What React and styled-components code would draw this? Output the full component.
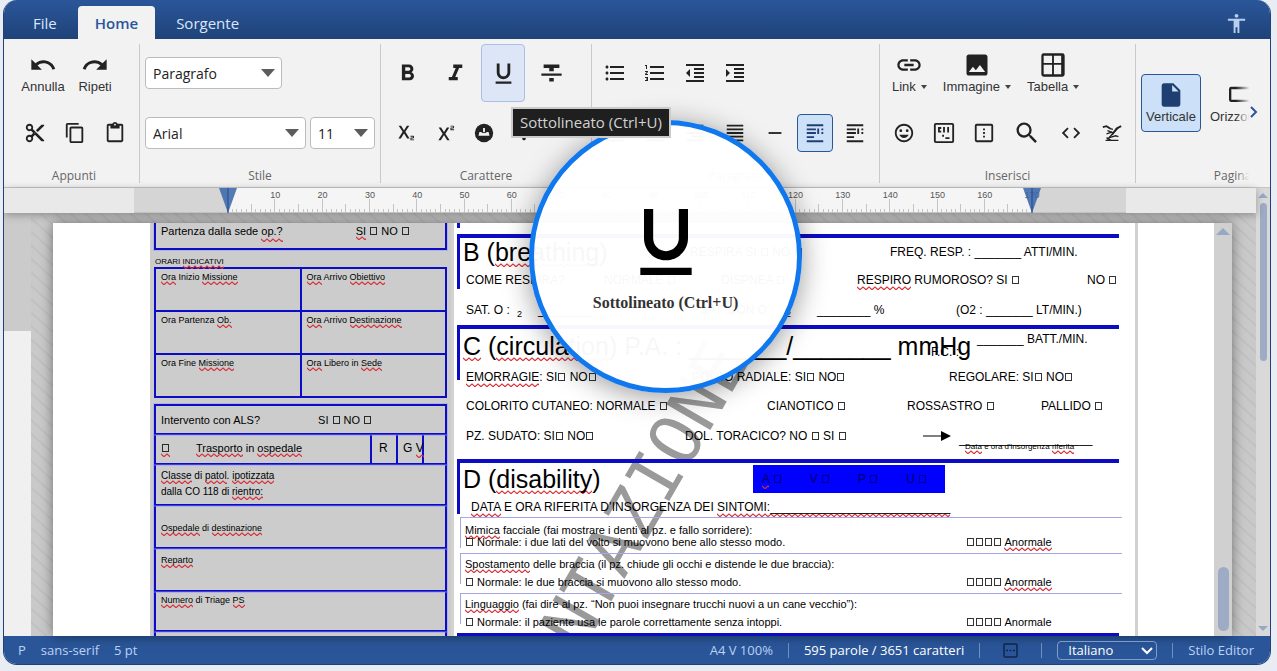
import React from 'react';
import styled, { createGlobalStyle, css } from 'styled-components';
import {
  MdAccessibility,
  MdUndo,
  MdRedo,
  MdContentCut,
  MdContentCopy,
  MdContentPaste,
  MdFormatBold,
  MdFormatItalic,
  MdFormatUnderlined,
  MdFormatStrikethrough,
  MdSubscript,
  MdSuperscript,
  MdFormatListBulleted,
  MdFormatListNumbered,
  MdFormatIndentDecrease,
  MdFormatIndentIncrease,
  MdFormatAlignLeft,
  MdFormatAlignCenter,
  MdFormatAlignRight,
  MdFormatAlignJustify,
  MdMoreVert,
  MdRemove,
  MdLink,
  MdImage,
  MdInsertEmoticon,
  MdSearch,
  MdCode,
  MdInsertDriveFile,
} from 'react-icons/md';


const GlobalStyle = createGlobalStyle`
  * {
    box-sizing: border-box;
  }
  body {
    margin: 0;
    background-color: #e9ecf3;
    font-family: "Open Sans", "Noto Sans", sans-serif;
    font-size: 14px;
    color: #222;
  }
  button, select {
    font-family: inherit;
  }
`;

const Frame = styled.div`
  position: relative;
  display: flex;
  flex-direction: column;
  height: calc(100vh - 6px);
  margin: 0 6px 6px 3px;
  border: solid #1f4178;
  border-width: 0 1px 1px;
  border-radius: 14px;
  background-color: #f2f2f2;
  overflow: hidden;
`;

/* ---- header ---- */

const Header = styled.header`
  display: flex;
  align-items: flex-end;
  flex: none;
  height: 39px;
  padding: 0 22px 0 12px;
  background: linear-gradient(#2a5699, #1f4379);
`;

const Tabs = styled.nav`
  display: flex;
  gap: 4px;
  flex: 1;
`;

const Tab = styled.button`
  height: 33px;
  padding: 0 17px;
  border: 0;
  border-radius: 4px 4px 0 0;
  font-size: 15px;
  color: ${p => (p.$active ? '#2a5699' : '#dbe7fb')};
  font-weight: ${p => (p.$active ? 600 : 400)};
  background-color: ${p => (p.$active ? '#f2f2f2' : 'transparent')};
`;

const HeaderButton = styled.button`
  display: flex;
  padding: 0;
  border: 0;
  margin-bottom: 4px;
  background: none;
  color: #b9cff2;
  font-size: 23px;
`;

/* ---- ribbon ---- */

const Ribbon = styled.div`
  position: relative;
  display: flex;
  flex: none;
  padding-top: 5px;
  border-bottom: 1px solid #c6c6c6;
  overflow: hidden;
`;

const Group = styled.section`
  flex: none;
  width: ${p => p.$width}px;
  padding-left: ${p => p.$pad}px;
  margin-bottom: 4px;
  border-right: 1px solid #c9c9c9;
`;

const ToolRow = styled.div`
  display: flex;
  align-items: center;
  gap: ${p => (p.$gap === undefined ? 4 : p.$gap)}px;
  height: ${p => (p.$tall ? 118 : 58)}px;
  margin-bottom: 2px;
  padding-left: ${p => p.$indent || 0}px;
`;

const GroupTitle = styled.h2`
  margin: 0 0 0 -${p => p.$pad}px;
  padding-top: 4px;
  font-size: 12px;
  font-weight: 400;
  line-height: 15px;
  text-align: center;
  color: #666;
`;

const active = css`
  border-color: #2a5699;
  background-color: #cce0f8;
  color: #1f3f73;
`;

const ToolButton = styled.button`
  display: flex;
  align-items: center;
  justify-content: center;
  width: ${p => p.$width || 36}px;
  height: 38px;
  padding: 0;
  border: 1px solid transparent;
  border-radius: 4px;
  background: none;
  color: #222;
  font-size: ${p => p.$size || 22}px;
  ${p => p.$active && active}
`;

const BigToolButton = styled(ToolButton)`
  width: 44px;
  height: 58px;
  font-size: 27px;
  ${p => p.$hover && css`
    border-color: #a9bfe6;
    background-color: #dce6f6;
  `}
`;

const LabelButton = styled.button`
  display: flex;
  flex-direction: column;
  align-items: center;
  height: 58px;
  min-width: ${p => p.$min || 0}px;
  padding: 6px ${p => p.$pad || 0}px 0;
  border: 1px solid transparent;
  border-radius: 4px;
  background: none;
  color: #222;
  font-size: 28px;
  ${p => p.$active && active}

  span {
    display: flex;
    align-items: center;
    gap: 5px;
    font: 13px/16px "Liberation Sans", Arial, sans-serif;
    color: #333;
    white-space: nowrap;
  }
`;

const Caret = styled.i`
  border: 3px solid transparent;
  border-top: 4px solid #444;
  border-bottom: 0;
`;

const SelectBox = styled.label`
  position: relative;
  width: ${p => p.$width}px;

  select {
    appearance: none;
    width: 100%;
    height: 32px;
    padding: 0 7px;
    border: 1px solid #bbb;
    border-radius: 4px;
    background-color: #fff;
    color: #222;
    font-size: 14px;
  }
  &::after {
    content: '';
    position: absolute;
    right: 7px;
    top: 12px;
    border: 7px solid transparent;
    border-top: 8px solid #5c5c5c;
    border-bottom: 0;
    pointer-events: none;
  }
`;

const ScrollRight = styled.button`
  position: absolute;
  right: 0;
  top: 0;
  bottom: 0;
  width: 34px;
  padding: 0 0 0 2px;
  border: 0;
  background: linear-gradient(to right, rgba(242, 242, 242, 0), #f2f2f2 40%);
`;

/* ---- body: ruler, page, scrollbars ---- */

const Body = styled.main`
  display: flex;
  flex: 1;
  min-height: 0;
`;

const Column = styled.div`
  display: flex;
  flex-direction: column;
  flex: 1;
  min-width: 0;
`;

const Ruler = styled.div`
  display: flex;
  justify-content: center;
  flex: none;
  height: 25px;
  background-color: #e9e9e9;
  position: relative;
  z-index: 1;
  box-shadow: 0 2px 8px rgba(0, 0, 0, .3);
`;

const RulerSheet = styled.div`
  width: 992px;
  padding: 0 94px;
  background-color: #d5d5d5;
  border-bottom: 1px solid #c2c2c2;
`;

const RulerScale = styled.div`
  position: relative;
  display: flex;
  height: 24px;
  background-color: #f5f5f5;
`;

const Centimetre = styled.div`
  position: relative;
  display: flex;
  align-items: flex-end;
  flex: 1;

  span {
    position: absolute;
    right: -12px;
    top: 2px;
    width: 24px;
    text-align: center;
    font: 9px/11px "Liberation Sans", Arial, sans-serif;
    color: #555;
  }
`;

const Tick = styled.i`
  flex: 1;
  height: ${p => p.$height}px;
  border-right: 1px solid #c4c4c4;
`;

const RulerMark = styled.svg`
  position: absolute;
  top: 0;
  ${p => p.$side}: -9px;
`;

const Workspace = styled.div`
  display: flex;
  flex: 1;
  min-height: 0;
  background: repeating-linear-gradient(42deg, #c9c9c9 0 7px, #c1c1c1 8px 9px, #c9c9c9 10px);
`;

const VerticalRuler = styled.div`
  flex: none;
  width: 27px;
  background: linear-gradient(#cbcbcb 0 118px, #f0f0f0 118px);
`;

const Page = styled.article`
  position: relative;
  display: flex;
  flex: 1;
  margin: 10px 24px 0 22px;
  background-color: #fff;
  box-shadow: 0 0 12px rgba(0, 0, 0, .45);
  overflow: hidden;
  font-family: "Liberation Sans", Arial, sans-serif;
  font-size: 12px;
  color: #000;
  white-space: pre;
`;

const PageMargin = styled.div`
  flex: none;
  width: 76px;
`;

const Track = styled.div`
  display: flex;
  flex-direction: column;
  align-items: center;
  flex: none;
  width: ${p => p.$width}px;
  padding: 5px 0;
  background-color: ${p => p.$color};
`;

const TrackArrow = styled.i`
  border: ${p => p.$size}px solid transparent;
  ${p => (p.$down ? 'border-bottom: 0; border-top-color: #97a8c4;' : 'border-top: 0; border-bottom-color: #97a8c4;')}
`;

const Thumb = styled.div`
  width: ${p => p.$width}px;
  height: ${p => p.$height}px;
  margin: ${p => p.$top}px 0 auto;
  border-radius: 6px;
  background-color: #9dabc4;
`;

const Watermark = styled.div`
  position: absolute;
  left: 592px;
  top: 272px;
  transform: translate(-50%, -50%) rotate(-60deg);
  font: 70px/70px "DejaVu Sans Mono", monospace;
  color: #9a9a9a;
`;

/* ---- printed form, left side ---- */

const zigzag = `url("data:image/svg+xml,%3Csvg xmlns='http://www.w3.org/2000/svg' width='6' height='4'%3E%3Cpath d='M-1 0l4 3.500 4-3.500' transform='translate(0 .2)' fill='none' stroke='%23d62f37' stroke-width='1.200'/%3E%3C/svg%3E")`;

const Wrong = styled.span`
  padding-bottom: 3px;
  background: ${zigzag} left bottom repeat-x;
`;

const Square = styled.span`
  display: inline-block;
  width: 7px;
  height: 8px;
  margin: 0 1px;
  border: 1px solid currentColor;
  opacity: .8;
`;

const LeftForm = styled.div`
  position: relative;
  flex: none;
  width: 301px;
  margin-left: 97px;
  padding: 0 4px;
  background-color: #ccc;
  font-size: 9px;
`;

const Box = styled.div`
  display: flex;
  align-items: ${p => p.$align || 'center'};
  height: ${p => p.$height}px;
  margin-top: ${p => p.$top || 0}px;
  padding: ${p => p.$inset || 0}px 5px 0;
  border: 2px solid #0c0cc4;
  ${p => p.$open && 'border-top: 0;'}
  font-size: ${p => p.$size || 9}px;
  line-height: 16px;
  outline: 1px solid rgba(140, 140, 255, .4);
`;

const Push = styled.span`
  margin-left: ${p => p.$by}px;
`;

const Caption = styled.div`
  padding: 6px 1px 0;
  font-size: 8px;
  line-height: 11px;
`;

const Times = styled.table`
  width: 100%;
  border-collapse: collapse;

  td {
    width: 50%;
    height: 43px;
    padding: 3px 5px;
    border: 2px solid #0c0cc4;
    line-height: 11px;
    vertical-align: top;
  }
`;

const Transport = styled(Box)`
  padding: 0;
  align-items: stretch;
  line-height: 26px;
`;

const TransportCell = styled.div`
  width: ${p => p.$width}px;
  padding-left: ${p => p.$pad || 0}px;
  border-right: ${p => (p.$last ? 0 : '2px solid #0c0cc4')};
  font-size: ${p => p.$size || 11}px;
`;

/* ---- printed form, right side ---- */

const RightForm = styled.div`
  position: relative;
  flex: 1;
  padding: 0 16px 0 3px;
  border: solid #d2d2d2;
  border-width: 0 3px;
`;

const Stub = styled.div`
  width: 3px;
  height: 5px;
  margin-bottom: 6px;
  background-color: #0c0cc4;
`;

const Section = styled.section`
  position: relative;
  height: ${p => p.$height}px;
  padding-left: 6px;
  border-top: 4px solid #0c0cc4;

  &::before {
    content: '';
    position: absolute;
    left: 0;
    top: 0;
    width: 3px;
    height: 51px;
    background-color: #0c0cc4;
  }
`;

const Line = styled.div`
  display: grid;
  grid-template-columns: ${p => p.$cols};
  align-items: center;
  height: ${p => p.$height || 28}px;
  padding-left: ${p => (p.$title ? 0 : 3)}px;
`;

const Title = styled.h3`
  margin: 0;
  font-size: 25px;
  line-height: 28px;
  font-weight: 400;

  ${Wrong} {
    padding-bottom: 1px;
  }
`;

const Small = styled.span`
  font-size: 9px;
  padding-top: 8px;
`;

const HeartRate = styled.span`
  position: absolute;
  left: 474px;
  top: 16px;
`;

const Beats = styled.span`
  align-self: start;
  padding-top: 3px;
`;

const Onset = styled.div`
  position: relative;
  padding-top: 5px;

  small {
    position: absolute;
    left: 6px;
    top: 15px;
    font-size: 8px;
  }
`;

const Avpu = styled.div`
  display: flex;
  gap: 28px;
  width: 192px;
  height: 28px;
  padding-left: 9px;
  align-items: center;
  background-color: #0000fe;
  color: #000060;
`;

const Symptoms = styled.p`
  margin: 0;
  padding: 5px 0 0 8px;
  height: 22px;
  line-height: 14px;
`;

const Test = styled.div`
  height: ${p => p.$height}px;
  margin: 0 -3px 0 -3px;
  padding: ${p => p.$top}px 0 0 5px;
  border-top: 1px solid #a6a6e4;
  background: linear-gradient(#a6a6e4, #a6a6e4) left top / 1px 30px no-repeat;
  font-size: 11px;
  line-height: ${p => p.$line || 14}px;
`;

const Answers = styled.div`
  display: grid;
  grid-template-columns: 501px auto;
  padding-top: ${p => p.$top}px;
`;

/* ---- overlays ---- */

const Tooltip = styled.div`
  position: absolute;
  left: 507px;
  top: 107px;
  padding: 4px 7px 5px;
  border: 2px solid #cbcbcb;
  background-color: #1f1f1f;
  color: #d2d2d2;
  font-size: 15px;
  line-height: 18px;
  z-index: 3;
`;

const Lens = styled.figure`
  position: absolute;
  left: 525px;
  top: 120px;
  display: flex;
  flex-direction: column;
  align-items: center;
  width: 273px;
  height: 273px;
  margin: 0;
  padding-top: 73px;
  border: 5px solid #1078ee;
  border-radius: 50%;
  background-color: rgba(255, 255, 255, .97);
  box-shadow: 0 4px 28px rgba(0, 0, 0, .4);
  color: #000;
  z-index: 2;

  figcaption {
    margin-top: 7px;
    font: bold 16px/20px "Liberation Serif", "Times New Roman", serif;
    color: #333;
  }
`;

/* ---- status bar ---- */

const StatusBar = styled.footer`
  display: flex;
  align-items: center;
  flex: none;
  height: 28px;
  gap: 15px;
  padding: 0 16px 0 14px;
  background-color: #2a5699;
  color: #bcd2f5;
  font-size: 13px;
`;

const Spacer = styled.div`
  flex: 1;
`;

const Divider = styled.i`
  width: 1px;
  height: 15px;
  background-color: #6f90c4;
`;

const Count = styled.span`
  color: #fff;
`;

const StatusButton = styled.button`
  display: flex;
  padding: 0;
  border: 0;
  margin: 0 8px;
  background: none;
  color: #10264c;
`;

const Language = styled.label`
  position: relative;
  display: flex;

  select {
    appearance: none;
    width: 100px;
    height: 19px;
    padding: 0 10px;
    border: 1px solid #7f9dcc;
    border-radius: 4px;
    background: none;
    color: #fff;
    font-size: 13px;
    line-height: 16px;
  }
  svg {
    position: absolute;
    right: 4px;
    top: 4px;
    pointer-events: none;
  }
`;


const Icon = ({ children }) => (
  <svg viewBox="0 0 24 24" width="1em" height="1em" fill="none" stroke="currentColor" strokeWidth="2" aria-hidden="true">
    {children}
  </svg>
);

const PinIcon = () => (
  <Icon>
    <circle cx="12" cy="12" r="10" fill="currentColor" stroke="none" />
    <path d="M11 6.500h2V11h4l1 4H6l1-4h4z" fill="#f2f2f2" stroke="none" />
    <path d="M9.500 11.500h5" strokeWidth="1" />
  </Icon>
);

const WrapIcon = () => (
  <Icon>
    <path d="M3 3.500h18M3 8h10M3 12h10M3 16.500h8M3 21h18" />
    <path d="M15.500 7v6M20 7v2M20 11v2" />
  </Icon>
);

const CaptchaIcon = () => (
  <Icon>
    <rect x="2" y="2" width="20" height="20" rx="1" />
    <path d="M9 6.500H6.500v4H9M12 5.500v6M16.500 5.500v6" />
    <path d="M10 15h2M13.500 17.500H18" />
  </Icon>
);

const BreakIcon = () => (
  <Icon>
    <rect x="3" y="3" width="18" height="18" rx="1" />
    <path d="M12 7v2M12 11v2M12 15v2" />
  </Icon>
);

const TableIcon = () => (
  <Icon>
    <rect x="3" y="3" width="18" height="18" rx="1" />
    <path d="M3 11h18M12 3v18" strokeWidth="1.600" />
    <path d="M20 3v18" />
  </Icon>
);

const SignIcon = () => (
  <Icon>
    <path d="M2 5.500l4-1 4 2.500M22 4.500l-5 2.500-5 7" />
    <path d="M9 7l4 1M7 9.500l6 2M6 13l6-2M5 20h14M6 17l5 3M9 17l7-2 3 1" strokeWidth="1.500" />
    <path d="M19 6L7 19" strokeWidth="1.500" />
  </Icon>
);

const LandscapeIcon = () => (
  <Icon>
    <rect x="1" y="6" width="22" height="11" rx="1" />
  </Icon>
);

const Marker = ({ side }) => (
  <RulerMark $side={side} width="18" height="25" viewBox="0 0 18 25">
    <path d="M0 0h18L9 25z" fill="#3c69ab" fillOpacity=".88" />
    <path d="M9 0v25" stroke="#1f4a90" />
  </RulerMark>
);

const ticks = [3, 3, 3, 3, 8, 3, 3, 3, 3, 13];
const marks = Array.from({ length: 17 }, (_, i) => (i + 1) * 10);

function RibbonBar() {
  return (
    <Ribbon>
      <Group $width={136} $pad={13}>
        <ToolRow $gap={0}>
          <LabelButton $min={52}><MdUndo /><span>Annulla</span></LabelButton>
          <LabelButton $min={52}><MdRedo /><span>Ripeti</span></LabelButton>
        </ToolRow>
        <ToolRow>
          <ToolButton aria-label="Taglia"><MdContentCut /></ToolButton>
          <ToolButton aria-label="Copia"><MdContentCopy /></ToolButton>
          <ToolButton aria-label="Incolla"><MdContentPaste /></ToolButton>
        </ToolRow>
        <GroupTitle $pad={8}>Appunti</GroupTitle>
      </Group>

      <Group $width={241} $pad={5}>
        <ToolRow>
          <SelectBox $width={137}>
            <select aria-label="Stile paragrafo"><option>Paragrafo</option></select>
          </SelectBox>
        </ToolRow>
        <ToolRow>
          <SelectBox $width={161}>
            <select aria-label="Carattere"><option>Arial</option></select>
          </SelectBox>
          <SelectBox $width={65}>
            <select aria-label="Dimensione"><option>11</option></select>
          </SelectBox>
        </ToolRow>
        <GroupTitle $pad={5}>Stile</GroupTitle>
      </Group>

      <Group $width={211} $pad={4}>
        <ToolRow>
          <BigToolButton aria-label="Grassetto"><MdFormatBold /></BigToolButton>
          <BigToolButton aria-label="Corsivo"><MdFormatItalic /></BigToolButton>
          <BigToolButton aria-label="Sottolineato" $hover><MdFormatUnderlined /></BigToolButton>
          <BigToolButton aria-label="Barrato"><MdFormatStrikethrough /></BigToolButton>
        </ToolRow>
        <ToolRow $indent={1}>
          <ToolButton aria-label="Pedice"><MdSubscript /></ToolButton>
          <ToolButton aria-label="Apice"><MdSuperscript /></ToolButton>
          <ToolButton aria-label="Colore evidenziatore"><PinIcon /></ToolButton>
          <ToolButton aria-label="Altro"><MdMoreVert /></ToolButton>
        </ToolRow>
        <GroupTitle $pad={4}>Carattere</GroupTitle>
      </Group>

      <Group $width={288} $pad={5}>
        <ToolRow>
          <ToolButton $size={24} aria-label="Elenco puntato"><MdFormatListBulleted /></ToolButton>
          <ToolButton $size={24} aria-label="Elenco numerato"><MdFormatListNumbered /></ToolButton>
          <ToolButton $size={24} aria-label="Riduci rientro"><MdFormatIndentDecrease /></ToolButton>
          <ToolButton $size={24} aria-label="Aumenta rientro"><MdFormatIndentIncrease /></ToolButton>
        </ToolRow>
        <ToolRow>
          <ToolButton aria-label="Allinea a sinistra"><MdFormatAlignLeft /></ToolButton>
          <ToolButton aria-label="Centra"><MdFormatAlignCenter /></ToolButton>
          <ToolButton aria-label="Allinea a destra"><MdFormatAlignRight /></ToolButton>
          <ToolButton aria-label="Giustifica"><MdFormatAlignJustify /></ToolButton>
          <ToolButton aria-label="Linea"><MdRemove /></ToolButton>
          <ToolButton aria-label="Testo a sinistra" $active><WrapIcon /></ToolButton>
          <ToolButton aria-label="Testo a destra"><WrapIcon /></ToolButton>
        </ToolRow>
        <GroupTitle $pad={5}>Paragrafo</GroupTitle>
      </Group>

      <Group $width={256} $pad={4}>
        <ToolRow $gap={0}>
          <LabelButton $pad={7}><MdLink /><span>Link <Caret /></span></LabelButton>
          <LabelButton $pad={7}><MdImage /><span>Immagine <Caret /></span></LabelButton>
          <LabelButton $pad={7}><TableIcon /><span>Tabella <Caret /></span></LabelButton>
        </ToolRow>
        <ToolRow $indent={2}>
          <ToolButton aria-label="Emoji"><MdInsertEmoticon /></ToolButton>
          <ToolButton aria-label="Codice"><CaptchaIcon /></ToolButton>
          <ToolButton aria-label="Interruzione"><BreakIcon /></ToolButton>
          <ToolButton aria-label="Cerca" $width={42} $size={28}><MdSearch /></ToolButton>
          <ToolButton aria-label="Sorgente" $width={38}><MdCode /></ToolButton>
          <ToolButton aria-label="Firma"><SignIcon /></ToolButton>
        </ToolRow>
        <GroupTitle $pad={4}>Inserisci</GroupTitle>
      </Group>

      <Group $width={194} $pad={5}>
        <ToolRow $tall>
          <LabelButton $active $min={60} $pad={4}><MdInsertDriveFile /><span>Verticale</span></LabelButton>
          <LabelButton $pad={4}><LandscapeIcon /><span>Orizzontale</span></LabelButton>
        </ToolRow>
        <GroupTitle $pad={5}>Pagina</GroupTitle>
      </Group>

      <ScrollRight aria-label="Avanti">
        <svg width="8" height="12" viewBox="0 0 8 12" fill="none" stroke="#2a5699" strokeWidth="2">
          <path d="M1 1l5 5-5 5" />
        </svg>
      </ScrollRight>
    </Ribbon>
  );
}

function LeftSide() {
  return (
    <LeftForm>
      <Box $open $height={27} $size={11} $align="flex-start">
        Partenza dalla sede <Wrong>op.?</Wrong>
        <Push $by={73}><Wrong>SI</Wrong> <Square /> NO <Square /></Push>
      </Box>
      <Caption>ORARI <Wrong>INDICATIVI</Wrong></Caption>
      <Times>
        <tbody>
          <tr>
            <td><Wrong>Ora</Wrong> Inizio <Wrong>Missione</Wrong></td>
            <td><Wrong>Ora</Wrong> Arrivo <Wrong>Obiettivo</Wrong></td>
          </tr>
          <tr>
            <td>Ora Partenza <Wrong>Ob.</Wrong></td>
            <td><Wrong>Ora</Wrong> Arrivo <Wrong>Destinazione</Wrong></td>
          </tr>
          <tr>
            <td>Ora Fine <Wrong>Missione</Wrong></td>
            <td><Wrong>Ora</Wrong> Libero in <Wrong>Sede</Wrong></td>
          </tr>
        </tbody>
      </Times>
      <Box $top={6} $height={31} $size={11}>
        Intervento con ALS?
        <Push $by={58}>SI <Square /> NO <Square /></Push>
      </Box>
      <Transport $open $height={30} $size={11}>
        <TransportCell $width={216} $pad={5}>
          <Wrong><Square /></Wrong>
          <Push $by={26}><Wrong>Trasporto</Wrong> in <Wrong>ospedale</Wrong></Push>
        </TransportCell>
        <TransportCell $width={26} $pad={7} $size={12}>R</TransportCell>
        <TransportCell $width={26} $pad={5} $size={12}>G <Wrong>V</Wrong></TransportCell>
        <TransportCell $last />
      </Transport>
      <Box $open $height={41} $size={10} $align="flex-start" $inset={3}>
        <div>
          <Wrong>Classe</Wrong> di <Wrong>patol</Wrong>. <Wrong>ipotizzata</Wrong>{'\n'}
          dalla CO 118 di <Wrong>rientro:</Wrong>
        </div>
      </Box>
      <Box $open $height={43} $inset={3}>
        <div><Wrong>Ospedale</Wrong> di <Wrong>destinazione</Wrong></div>
      </Box>
      <Box $open $height={43} $align="flex-start" $inset={3}>
        <div><Wrong>Reparto</Wrong></div>
      </Box>
      <Box $open $height={40} $align="flex-start">
        <div><Wrong>Numero</Wrong> di Triage <Wrong>PS</Wrong></div>
      </Box>
      <Box $open $height={40} />
    </LeftForm>
  );
}

function RightSide() {
  return (
    <RightForm>
      <Stub />
      <Section $height={91}>
        <Line $title $cols="227px 200px auto">
          <Title>B (<Wrong>breathing</Wrong>)</Title>
          <span>RESPIRA SI <Square /> NO <Square /></span>
          <span>FREQ. RESP. : _______ ATTI/MIN.</span>
        </Line>
        <Line $cols="138px 117px 136px 230px auto">
          <span>COME RESPIRA?</span>
          <span>NORMALE <Square /></span>
          <span>DISPNEA <Square /></span>
          <span><Wrong>RESPIRO</Wrong> RUMOROSO? SI <Square /></span>
          <span>NO <Square /></span>
        </Line>
        <Line $height={31} $cols="51px 21px 162px 86px 31px 139px auto">
          <span>SAT. O :</span>
          <Small>2</Small>
          <span>________</span>
          <span>SAT. CON O :</span>
          <Small>2</Small>
          <span>________ %</span>
          <span>(O2 : _______ LT/MIN.)</span>
        </Line>
      </Section>

      <Section $height={134}>
        <Line $title $height={34} $cols="514px auto">
          <Title><Wrong>C</Wrong> (<Wrong>circulation</Wrong>) P.A. : _______/_______ mmHg</Title>
          <Beats>_______ BATT./MIN.</Beats>
        </Line>
        <HeartRate>F.C. :</HeartRate>
        <Line $cols="226px 257px auto">
          <span><Wrong>EMORRAGIE</Wrong>: SI<Square /> NO<Square /></span>
          <span>POLSO RADIALE: SI<Square /> NO<Square /></span>
          <span>REGOLARE: SI<Square /> NO<Square /></span>
        </Line>
        <Line $height={30} $cols="301px 140px 134px auto">
          <span>COLORITO CUTANEO: NORMALE <Square /></span>
          <span>CIANOTICO <Square /></span>
          <span>ROSSASTRO <Square /></span>
          <span>PALLIDO <Square /></span>
        </Line>
        <Line $height={30} $cols="219px 238px 36px auto">
          <span>PZ. SUDATO: SI<Square /> NO<Square /></span>
          <span>DOL. TORACICO? NO <Square /> SI <Square /></span>
          <svg width="28" height="10" viewBox="0 0 28 10">
            <path d="M0 5h20" stroke="#000" strokeWidth="1" />
            <path d="M18 0l10 5-10 5z" />
          </svg>
          <Onset>
            ____________________
            <small><Wrong>Data</Wrong> e ora d'insorgenza <Wrong>riferita</Wrong></small>
          </Onset>
        </Line>
      </Section>

      <Section $height={174}>
        <Line $title $height={32} $cols="290px auto">
          <Title>D (<Wrong>disability</Wrong>)</Title>
          <Avpu>
            <span><Wrong>A</Wrong> <Square /></span>
            <span>V <Square /></span>
            <span>P <Square /></span>
            <span>U <Square /></span>
          </Avpu>
        </Line>
        <Symptoms>
          <Wrong>DATA</Wrong> E ORA RIFERITA D’INSORGENZA DEI <Wrong>SINTOMI:___________________________</Wrong>
        </Symptoms>
        <Test $height={36} $top={6} $line={12}>
          <div><Wrong>Mimica</Wrong> facciale (fai mostrare i denti al pz. e fallo sorridere):</div>
          <Answers $top={0}>
            <span><Square /> Normale: i due lati del volto si muovono bene allo stesso modo.</span>
            <span><Square /><Square /><Square /><Square /> <Wrong>Anormale</Wrong></span>
          </Answers>
        </Test>
        <Test $height={40} $top={3}>
          <div><Wrong>Spostamento</Wrong> delle braccia (il pz. chiude gli occhi e distende le due braccia):</div>
          <Answers $top={4}>
            <span><Square /> Normale: le due braccia si muovono allo stesso modo.</span>
            <span><Square /><Square /><Square /><Square /> <Wrong>Anormale</Wrong></span>
          </Answers>
        </Test>
        <Test $height={40} $top={3}>
          <div><Wrong>Linguaggio</Wrong> (fai dire al pz. “Non puoi insegnare trucchi nuovi a un cane vecchio”):</div>
          <Answers $top={4}>
            <span><Square /> Normale: il paziente usa le parole correttamente senza intoppi.</span>
            <span><Square /><Square /><Square /><Square /> Anormale</span>
          </Answers>
        </Test>
      </Section>
      <Section $height={60} />
    </RightForm>
  );
}

function App() {
  return (
    <>
      <GlobalStyle />
      <Frame>
        <Header>
          <Tabs>
            <Tab>File</Tab>
            <Tab $active>Home</Tab>
            <Tab>Sorgente</Tab>
          </Tabs>
          <HeaderButton aria-label="Accessibilità"><MdAccessibility /></HeaderButton>
        </Header>

        <RibbonBar />

        <Body>
          <Column>
            <Ruler>
              <RulerSheet>
                <RulerScale>
                  {marks.map(mark => (
                    <Centimetre key={mark}>
                      {ticks.map((height, i) => <Tick key={i} $height={height} />)}
                      <span>{mark}</span>
                    </Centimetre>
                  ))}
                  <Marker side="left" />
                  <Marker side="right" />
                </RulerScale>
              </RulerSheet>
            </Ruler>
            <Workspace>
              <VerticalRuler />
              <Page>
                <Watermark>NTAZIONE</Watermark>
                <LeftSide />
                <RightSide />
                <PageMargin />
                <Track $width={18} $color="#d0d0d0">
                  <TrackArrow $size={7} />
                  <Thumb $width={11} $height={200} $top={332} />
                </Track>
              </Page>
            </Workspace>
          </Column>
          <Track $width={14} $color="#d9d9d9">
            <TrackArrow $size={5} />
            <Thumb $width={7} $height={158} $top={5} />
            <TrackArrow $size={5} $down />
          </Track>
        </Body>

        <StatusBar>
          <span>P</span>
          <span>sans-serif</span>
          <span>5 pt</span>
          <Spacer />
          <span>A4 V 100%</span>
          <Divider />
          <Count>595 parole / 3651 caratteri</Count>
          <Divider />
          <StatusButton aria-label="Tastiera">
            <svg width="15" height="15" viewBox="0 0 15 15" fill="none" stroke="currentColor" strokeWidth="1.500">
              <rect x="1" y="1" width="13" height="13" rx="1" />
              <path d="M3 7.500h9" strokeDasharray="2 1.500" />
            </svg>
          </StatusButton>
          <Divider />
          <Language>
            <select aria-label="Lingua"><option>Italiano</option></select>
            <svg width="13" height="11" viewBox="0 0 13 11" fill="none" stroke="#fff" strokeWidth="2">
              <path d="M2 3l5 5 5-5" />
            </svg>
          </Language>
          <Divider />
          <span>Stilo Editor</span>
        </StatusBar>

        <Lens>
          <MdFormatUnderlined size={88} />
          <figcaption>Sottolineato (Ctrl+U)</figcaption>
        </Lens>
        <Tooltip role="tooltip">Sottolineato (Ctrl+U)</Tooltip>
      </Frame>
    </>
  );
}

export default App;
